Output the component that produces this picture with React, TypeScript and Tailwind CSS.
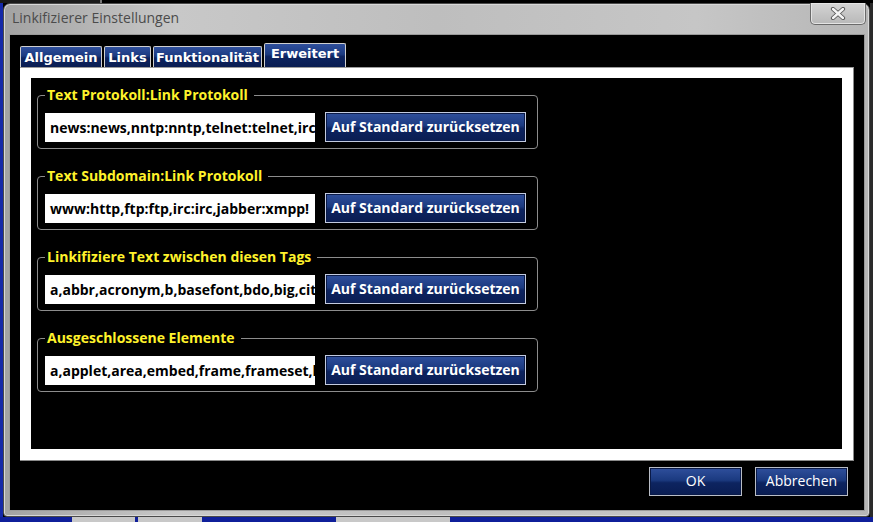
import React from "react";

const groups = [
  { title: "Text Protokoll:Link Protokoll", value: "news:news,nntp:nntp,telnet:telnet,irc:i" },
  { title: "Text Subdomain:Link Protokoll", value: "www:http,ftp:ftp,irc:irc,jabber:xmpp!" },
  { title: "Linkifiziere Text zwischen diesen Tags", value: "a,abbr,acronym,b,basefont,bdo,big,cite" },
  { title: "Ausgeschlossene Elemente", value: "a,applet,area,embed,frame,frameset,h" },
];

const tabs = [
  { label: "Allgemein", w: "w-[82px]", active: false },
  { label: "Links", w: "w-[47px]", active: false },
  { label: "Funktionalität", w: "w-[109px]", active: false },
  { label: "Erweitert", w: "w-[82px]", active: true },
];

export default function App() {
  return (
    <div className="w-[873px] h-[522px] bg-black overflow-hidden flex flex-col [font-family:'Open_Sans',sans-serif]">
      {/* top strip behind the window */}
      <div className="h-[3px] flex shrink-0">
        <div className="w-[100px] bg-[#1a1a1a]" />
        <div className="w-[2px] bg-[#777]" />
        <div className="flex-1 bg-black" />
      </div>
      <div className="flex flex-1 min-h-0">
        <div className="w-[3px] bg-[#1428a8]" />
        {/* window */}
        <div className="w-[867px] h-[514px] rounded-t-[7px] rounded-b-[4px] border border-[#4a4a4a] bg-[linear-gradient(to_right,#a2a2a2_0%,#c8c8c8_20%,#bebebe_50%,#c6c6c6_80%,#b6b6b6_100%)] flex flex-col shadow-[inset_0_0_0_1px_#d8d8d8]">
          {/* title bar */}
          <div className="h-[30px] flex justify-between shrink-0">
            <div className="pl-[8px] pt-[4px] text-[14px] leading-[20px] text-[#4b4b4b]">Linkifizierer Einstellungen</div>
            <div className="mr-[3px] -mt-[1px] w-[56px] h-[22px] rounded-b-[5px] border border-t-0 border-[#6a6a6a] bg-[linear-gradient(to_bottom,#d4d4d4,#b8b8b8)] shadow-[inset_0_0_0_1px_#e4e4e4] flex items-center justify-center">
              <svg width="16" height="13" viewBox="0 0 16 13">
                <path d="M3 2 L13 11 M13 2 L3 11" stroke="#555" strokeWidth="4.2" strokeLinecap="round" />
                <path d="M3 2 L13 11 M13 2 L3 11" stroke="#f4f4f4" strokeWidth="2.4" strokeLinecap="round" />
              </svg>
            </div>
          </div>
          {/* client */}
          <div className="flex-1 ml-[5px] mr-[4px] mb-[5px] border border-[#9a9a9a] bg-black flex flex-col">
            {/* tabs */}
            <div className="pt-[8px] pl-[10px] flex items-end gap-[2px] h-[32px] shrink-0">
              {tabs.map((t) => (
                <div
                  key={t.label}
                  className={
                    t.active
                      ? `${t.w} h-[24px] rounded-t-[2px] border border-b-0 border-[#cfcfcf] bg-[linear-gradient(to_bottom,#2f4f9c_0%,#1b3a80_45%,#0d2460_55%,#0a1d52_100%)] text-white font-bold text-[13px] leading-[20px] text-center [font-family:'DejaVu_Sans',sans-serif]`
                      : `${t.w} h-[21px] rounded-t-[2px] border border-b-0 border-[#cfcfcf] bg-[linear-gradient(to_bottom,#2f4f9c_0%,#1b3a80_45%,#0d2460_55%,#0a1d52_100%)] text-white font-bold text-[13px] leading-[21px] text-center [font-family:'DejaVu_Sans',sans-serif]`
                  }
                >
                  {t.label}
                </div>
              ))}
            </div>
            {/* tab panel */}
            <div className="ml-[10px] w-[834px] h-[394px] bg-white border-r border-b border-t border-t-[#9c9c9c] border-[#8a8a8a] p-[11px] pt-[10px] flex shrink-0">
              <div className="flex-1 bg-black pl-[6px] pt-[9px] flex flex-col gap-[19px]">
                {groups.map((g) => (
                  <fieldset key={g.title} className="w-[501px] border border-[#8c8c8c] rounded-[4px] pl-[7px] pr-[11px] pt-[9px] pb-[6px]">
                    <legend className="pl-[2px] pr-[6px] text-[14px] leading-[16px] font-bold text-[#fff22b]">{g.title}</legend>
                    <div className="flex items-start gap-[10px]">
                      <div className="mt-[1px] w-[270px] h-[29px] bg-white pl-[5px] overflow-hidden whitespace-nowrap text-[14px] leading-[29px] font-bold text-black">
                        {g.value}
                      </div>
                      <div className="w-[201px] h-[30px] border border-[#c3cbe0] bg-[linear-gradient(to_bottom,#2f4f9c_0%,#1b3a80_45%,#0d2460_55%,#0a1d52_100%)] shadow-[inset_0_0_0_1px_#0a1a48] text-white font-bold text-[14px] leading-[27px] text-center">
                        Auf Standard zurücksetzen
                      </div>
                    </div>
                  </fieldset>
                ))}
              </div>
            </div>
            {/* dialog buttons */}
            <div className="flex justify-end gap-[13px] pr-[16px] pt-[6px]">
              {["OK", "Abbrechen"].map((b) => (
                <div
                  key={b}
                  className="w-[93px] h-[29px] border border-[#b9bdc6] bg-[linear-gradient(to_bottom,#2f4f9c_0%,#1b3a80_45%,#0d2460_55%,#0a1d52_100%)] shadow-[inset_0_0_0_1px_#0a1a48] text-white text-[14px] leading-[26px] text-center"
                >
                  {b}
                </div>
              ))}
            </div>
          </div>
        </div>
        <div className="w-[3px] bg-[#2a2a2a]" />
      </div>
      {/* bottom strip behind the window */}
      <div className="h-[5px] flex shrink-0 bg-[#0f1f9a]">
        <div className="w-[72px]" />
        <div className="w-[63px] bg-[#c8c8c8]" />
        <div className="w-[3px]" />
        <div className="w-[64px] bg-[#c8c8c8]" />
        <div className="w-[134px]" />
        <div className="w-[114px] bg-[#c8c8c8]" />
      </div>
    </div>
  );
}
